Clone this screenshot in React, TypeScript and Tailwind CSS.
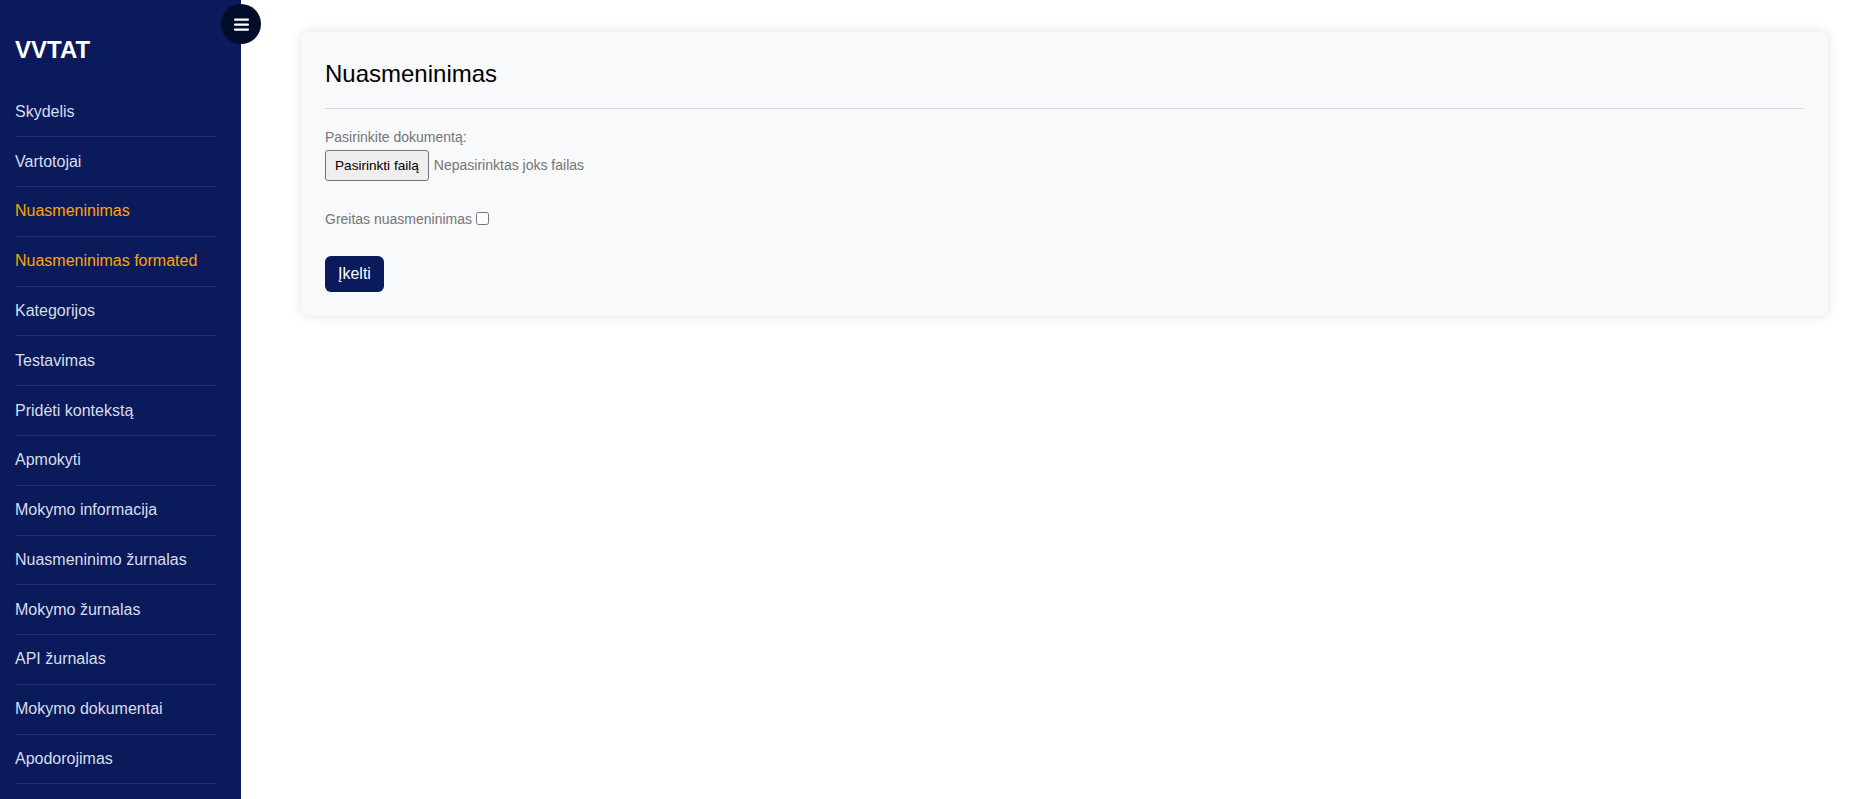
import React from "react";

const items = [
  { label: "Skydelis" },
  { label: "Vartotojai" },
  { label: "Nuasmeninimas", active: true },
  { label: "Nuasmeninimas formated", active: true },
  { label: "Kategorijos" },
  { label: "Testavimas" },
  { label: "Pridėti kontekstą" },
  { label: "Apmokyti" },
  { label: "Mokymo informacija" },
  { label: "Nuasmeninimo žurnalas" },
  { label: "Mokymo žurnalas" },
  { label: "API žurnalas" },
  { label: "Mokymo dokumentai" },
  { label: "Apodorojimas" },
];

export default function App() {
  return (
    <div className="relative flex h-screen w-full overflow-hidden bg-white font-['Liberation_Sans',Arial,sans-serif]">
      <aside className="w-[241px] shrink-0 bg-[#0a1a5a] h-full">
        <div className="h-[87.5px] pl-[15px] pt-[32px]">
          <div className="text-[24px] leading-[36px] font-bold text-white">VVTAT</div>
        </div>
        <ul className="pl-[15px] pr-[24px]">
          {items.map((it) => (
            <li
              key={it.label}
              className={
                "border-b border-[#25326e] pt-[12.4px] pb-[12.4px] text-[16px] leading-[24px] " +
                (it.active ? "text-[#ffa500]" : "text-[#d9ddec]")
              }
            >
              {it.label}
            </li>
          ))}
        </ul>
      </aside>

      <button className="absolute left-[221px] top-[4px] flex h-[40px] w-[40px] items-center justify-center rounded-full bg-[#040c2c]">
        <svg width="15" height="13" viewBox="0 0 15 13" fill="#ffffff">
          <rect x="0" y="0.5" width="15" height="2.2" rx="1" />
          <rect x="0" y="5.5" width="15" height="2.2" rx="1" />
          <rect x="0" y="10.5" width="15" height="2.2" rx="1" />
        </svg>
      </button>

      <main className="flex-1 pl-[60px] pr-[30px] pt-[32px]">
        <div className="rounded-[8px] bg-[#f8f9fa] p-[24px] shadow-[0_0_12px_rgba(0,0,0,0.12)]">
          <h2 className="text-[24px] leading-[36px] text-black">Nuasmeninimas</h2>
          <div className="mt-[16px] h-px bg-[#dadcdf]" />
          <div className="mt-[18px] text-[14px] leading-[21px] text-[#757575]">Pasirinkite dokumentą:</div>
          <div className="mt-[2px] flex items-center">
            <span className="h-[31px] rounded-[3px] border border-[#767676] bg-[#efefef] px-[9px] text-[13.6px] leading-[29px] text-black">
              Pasirinkti failą
            </span>
            <span className="ml-[5px] text-[14px] text-[#757575]">Nepasirinktas joks failas</span>
          </div>
          <div className="mt-[27.5px] flex items-center text-[14px] leading-[21px] text-[#757575]">
            <span>Greitas nuasmeninimas</span>
            <input type="checkbox" className="ml-[4px] mb-[2px] h-[13px] w-[13px]" />
          </div>
          <button className="mt-[26.5px] rounded-[6px] bg-[#0a1a5a] px-[13px] py-[6px] text-[16px] leading-[24px] text-white">
            Įkelti
          </button>
        </div>
      </main>
    </div>
  );
}
